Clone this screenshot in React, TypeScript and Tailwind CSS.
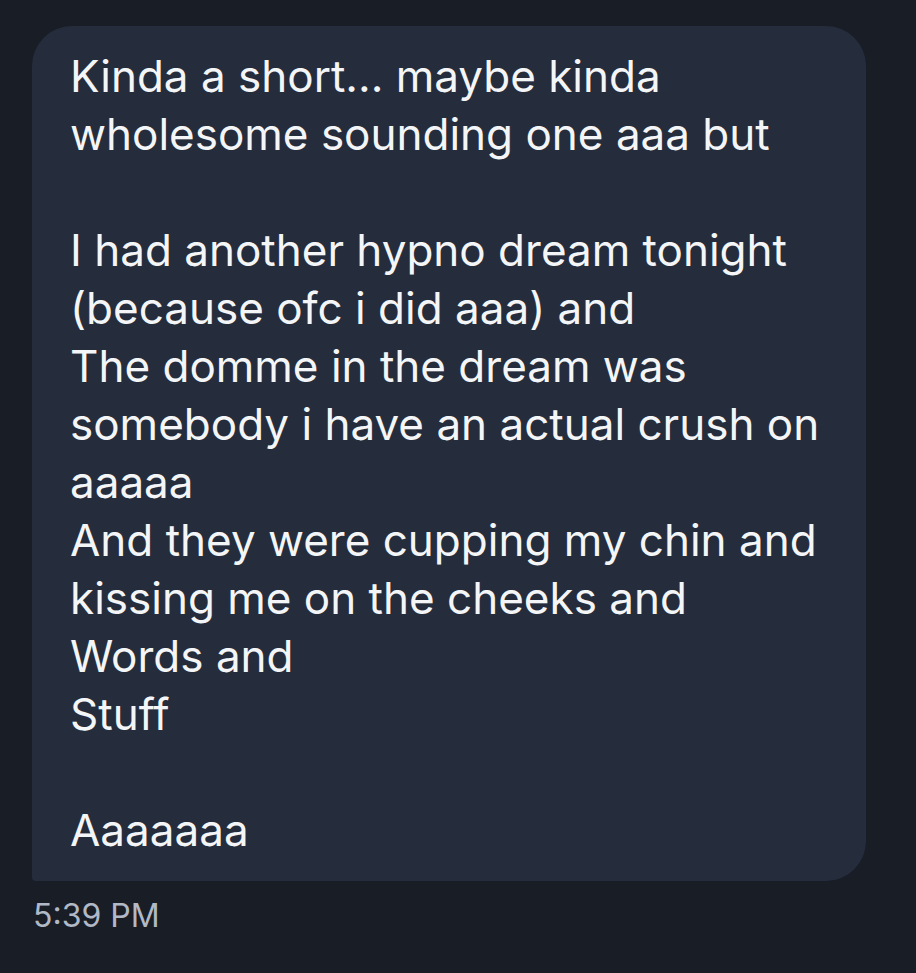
const lines = [
  'Kinda a short... maybe kinda',
  'wholesome sounding one aaa but',
  '',
  'I had another hypno dream tonight',
  '(because ofc i did aaa) and',
  'The domme in the dream was',
  'somebody i have an actual crush on',
  'aaaaa',
  'And they were cupping my chin and',
  'kissing me on the cheeks and',
  'Words and',
  'Stuff',
  '',
  'Aaaaaaa',
];

export default function App() {
  return (
    <div className="min-h-[973px] w-full bg-[#191d26] pl-[32px] pr-[50px] pt-[26px] font-['Inter',sans-serif]">
      {/* Message bubble */}
      <div className="rounded-[40px] rounded-bl-[4px] bg-[#252d3d] pl-[38px] pr-[30px] pt-[21px] pb-[22px] text-[44px] leading-[58px] text-[#f4f5f7]">
        {lines.map((line, i) => (
          <div key={i} className="h-[58px] whitespace-nowrap">
            {line}
          </div>
        ))}
      </div>

      {/* Timestamp */}
      <p className="mt-[16px] pl-[1px] text-[32px] leading-[38px] text-[#b1b9c7]">5:39 PM</p>
    </div>
  );
}
